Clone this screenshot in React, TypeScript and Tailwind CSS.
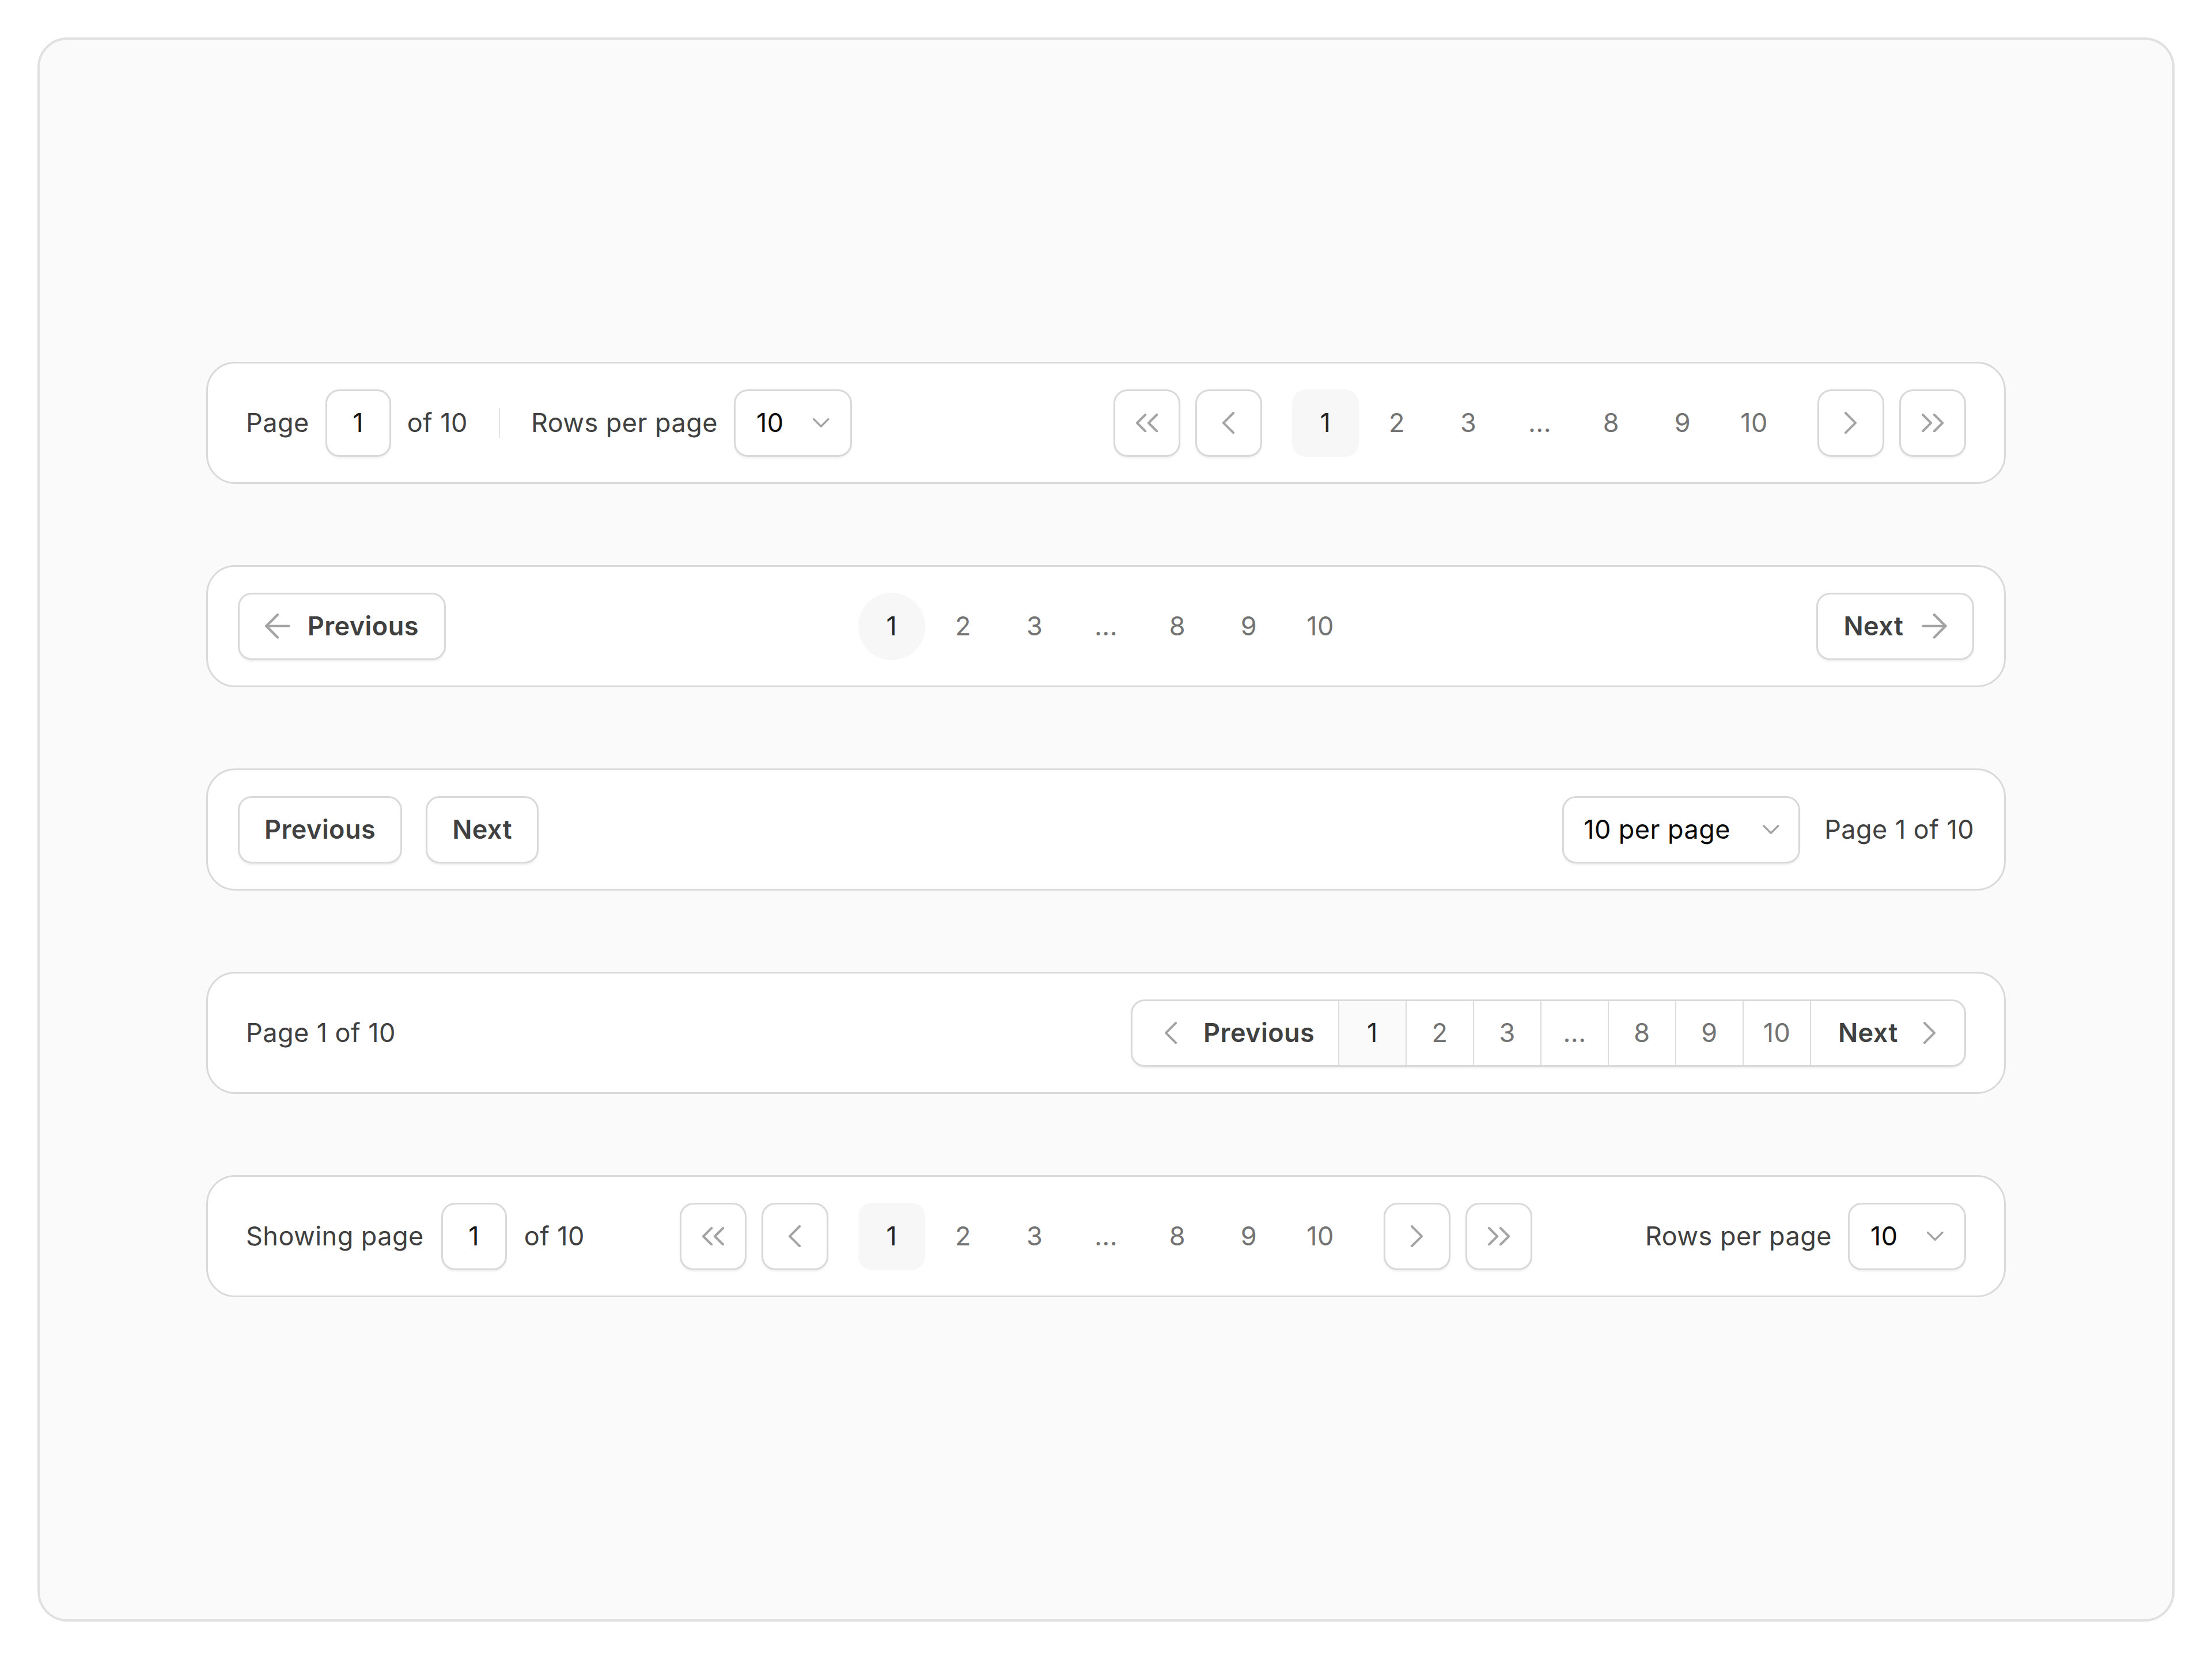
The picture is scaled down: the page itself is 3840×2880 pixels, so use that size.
import React from "react";

type IconProps = {
  d: string[];
  vb: [number, number, number, number];
  scale: number;
  sw: number;
};

// Stroke icon drawn on a tight viewBox so the visible glyph fills the box.
function Icon({ d, vb, scale, sw }: IconProps) {
  return (
    <svg
      width={vb[2] * scale}
      height={vb[3] * scale}
      viewBox={vb.join(" ")}
      fill="none"
      stroke="#a3a3a3"
      strokeWidth={sw}
      strokeLinecap="round"
      strokeLinejoin="round"
      className="shrink-0"
    >
      {d.map((p, i) => (
        <path key={i} d={p} />
      ))}
    </svg>
  );
}

const ChevronLeft = () => <Icon d={["m15 18-6-6 6-6"]} vb={[8.3, 5.3, 7.4, 13.4]} scale={2.85} sw={1.4} />;
const ChevronRight = () => <Icon d={["m9 18 6-6-6-6"]} vb={[8.3, 5.3, 7.4, 13.4]} scale={2.85} sw={1.4} />;
const ChevronsLeft = () => (
  <Icon d={["m11 17-5-5 5-5", "m18 17-5-5 5-5"]} vb={[5.3, 6.3, 13.4, 11.4]} scale={2.85} sw={1.4} />
);
const ChevronsRight = () => (
  <Icon d={["m6 17 5-5-5-5", "m13 17 5-5-5-5"]} vb={[5.3, 6.3, 13.4, 11.4]} scale={2.85} sw={1.4} />
);
const ChevronDown = () => <Icon d={["m6 9 6 6 6-6"]} vb={[5.2, 8.2, 13.6, 7.6]} scale={2.1} sw={1.6} />;
const ArrowLeft = () => <Icon d={["m12 19-7-7 7-7", "M19 12H5"]} vb={[4.2, 4.2, 15.6, 15.6]} scale={2.8} sw={1.55} />;
const ArrowRight = () => <Icon d={["M5 12h14", "m12 5 7 7-7 7"]} vb={[4.2, 4.2, 15.6, 15.6]} scale={2.8} sw={1.55} />;

const pages = ["1", "2", "3", "...", "8", "9", "10"];

function PageItems({ circle }: { circle?: boolean }) {
  return (
    <div className="flex items-center gap-[8px]">
      {pages.map((p, i) =>
        i === 0 ? (
          <div
            key={i}
            className={
              circle
                ? "flex h-[117px] w-[116px] items-center justify-center rounded-full bg-[#f7f7f7] text-[#262626]"
                : "flex h-[117px] w-[116px] items-center justify-center rounded-[24px] bg-[#f7f7f7] text-[#262626]"
            }
          >
            {p}
          </div>
        ) : (
          <div key={i} className="flex h-[117px] w-[116px] items-center justify-center text-[#737373]">
            {p}
          </div>
        )
      )}
    </div>
  );
}

function IconButton({ children }: { children: React.ReactNode }) {
  return (
    <button className="flex h-[117px] w-[116px] items-center justify-center rounded-[24px] border-[3px] border-[#d9d9d9] bg-white shadow-[0_3px_3px_rgba(0,0,0,0.05)]">
      {children}
    </button>
  );
}

function NavGroup() {
  return (
    <div className="flex items-center gap-[26px]">
      <IconButton>
        <ChevronsLeft />
      </IconButton>
      <IconButton>
        <ChevronLeft />
      </IconButton>
      <div className="mx-[26px]">
        <PageItems />
      </div>
      <IconButton>
        <ChevronRight />
      </IconButton>
      <IconButton>
        <ChevronsRight />
      </IconButton>
    </div>
  );
}

function PageInput() {
  return (
    <div className="flex h-[117px] w-[114px] items-center justify-center rounded-[24px] border-[3px] border-[#d9d9d9] bg-white text-[#171717] shadow-[0_3px_3px_rgba(0,0,0,0.05)]">
      1
    </div>
  );
}

const rowBase =
  "h-[212px] w-[3124px] items-center rounded-[50px] border-[3px] border-[#d9d9d9] bg-white";

const textButton =
  "flex h-[117px] items-center rounded-[24px] border-[3px] border-[#d9d9d9] bg-white font-semibold text-[#404040] shadow-[0_3px_3px_rgba(0,0,0,0.05)]";

export default function App() {
  return (
    <div className="h-[2880px] w-[3840px] bg-white p-[65px] font-[Inter,'Noto_Sans',sans-serif] text-[45px] leading-[1.2] tracking-[0.01em] text-[#404040]">
      <div className="flex h-full w-full flex-col items-center justify-center gap-[141px] rounded-[52px] border-[4px] border-[#e0e0e0] bg-[#fafafa]">
        {/* Page input, rows-per-page select and full navigation */}
        <div className={`flex justify-between px-[66px] ${rowBase}`}>
          <div className="flex items-center gap-[28px]">
            <span>Page</span>
            <PageInput />
            <span>of 10</span>
            <div className="mx-[26px] h-[52px] w-[2px] bg-[#e3e3e3]" />
            <span>Rows per page</span>
            <div className="flex h-[117px] w-[205px] items-center justify-between rounded-[24px] border-[3px] border-[#d9d9d9] bg-white px-[36px] text-[#0a0a0a] shadow-[0_3px_3px_rgba(0,0,0,0.05)]">
              <span>10</span>
              <ChevronDown />
            </div>
          </div>
          <NavGroup />
        </div>

        {/* Previous / pages / Next with arrows */}
        <div className={`grid grid-cols-[1fr_auto_1fr] px-[52px] ${rowBase}`}>
          <div className="flex justify-start">
            <button className={`${textButton} gap-[30px] px-[44px]`}>
              <ArrowLeft />
              <span>Previous</span>
            </button>
          </div>
          <PageItems circle />
          <div className="flex justify-end">
            <button className={`${textButton} gap-[32px] px-[44px]`}>
              <span>Next</span>
              <ArrowRight />
            </button>
          </div>
        </div>

        {/* Simple buttons with page size select */}
        <div className={`flex justify-between px-[52px] ${rowBase}`}>
          <div className="flex items-center gap-[41px]">
            <button className={`${textButton} px-[43px]`}>Previous</button>
            <button className={`${textButton} px-[43px]`}>Next</button>
          </div>
          <div className="flex items-center gap-[42px]">
            <div className="flex h-[117px] w-[413px] items-center justify-between rounded-[24px] border-[3px] border-[#d9d9d9] bg-white px-[34px] text-[#0a0a0a] shadow-[0_3px_3px_rgba(0,0,0,0.05)]">
              <span>10 per page</span>
              <ChevronDown />
            </div>
            <span>Page 1 of 10</span>
          </div>
        </div>

        {/* Segmented pagination */}
        <div className={`flex justify-between px-[66px] ${rowBase}`}>
          <span>Page 1 of 10</span>
          <div className="flex h-[117px] overflow-hidden rounded-[24px] border-[3px] border-[#d9d9d9] bg-white shadow-[0_3px_3px_rgba(0,0,0,0.05)]">
            <div className="flex w-[357px] items-center gap-[46px] pl-[56px] font-semibold text-[#404040]">
              <ChevronLeft />
              <span>Previous</span>
            </div>
            {pages.map((p, i) => (
              <div
                key={i}
                className={
                  i === 0
                    ? "flex w-[117px] items-center justify-center border-l-[2px] border-[#dcdcdc] bg-[#fafafa] text-[#262626]"
                    : "flex w-[117px] items-center justify-center border-l-[2px] border-[#dcdcdc] text-[#737373]"
                }
              >
                {p}
              </div>
            ))}
            <div className="flex w-[268px] items-center gap-[44px] border-l-[2px] border-[#dcdcdc] pl-[47px] font-semibold text-[#404040]">
              <span>Next</span>
              <ChevronRight />
            </div>
          </div>
        </div>

        {/* Centered navigation with page input and rows select */}
        <div className={`grid grid-cols-[1fr_auto_1fr] px-[66px] ${rowBase}`}>
          <div className="flex items-center gap-[30px]">
            <span>Showing page</span>
            <PageInput />
            <span>of 10</span>
          </div>
          <NavGroup />
          <div className="flex items-center justify-end gap-[28px]">
            <span>Rows per page</span>
            <div className="flex h-[117px] w-[205px] items-center justify-between rounded-[24px] border-[3px] border-[#d9d9d9] bg-white px-[36px] text-[#0a0a0a] shadow-[0_3px_3px_rgba(0,0,0,0.05)]">
              <span>10</span>
              <ChevronDown />
            </div>
          </div>
        </div>
      </div>
    </div>
  );
}
